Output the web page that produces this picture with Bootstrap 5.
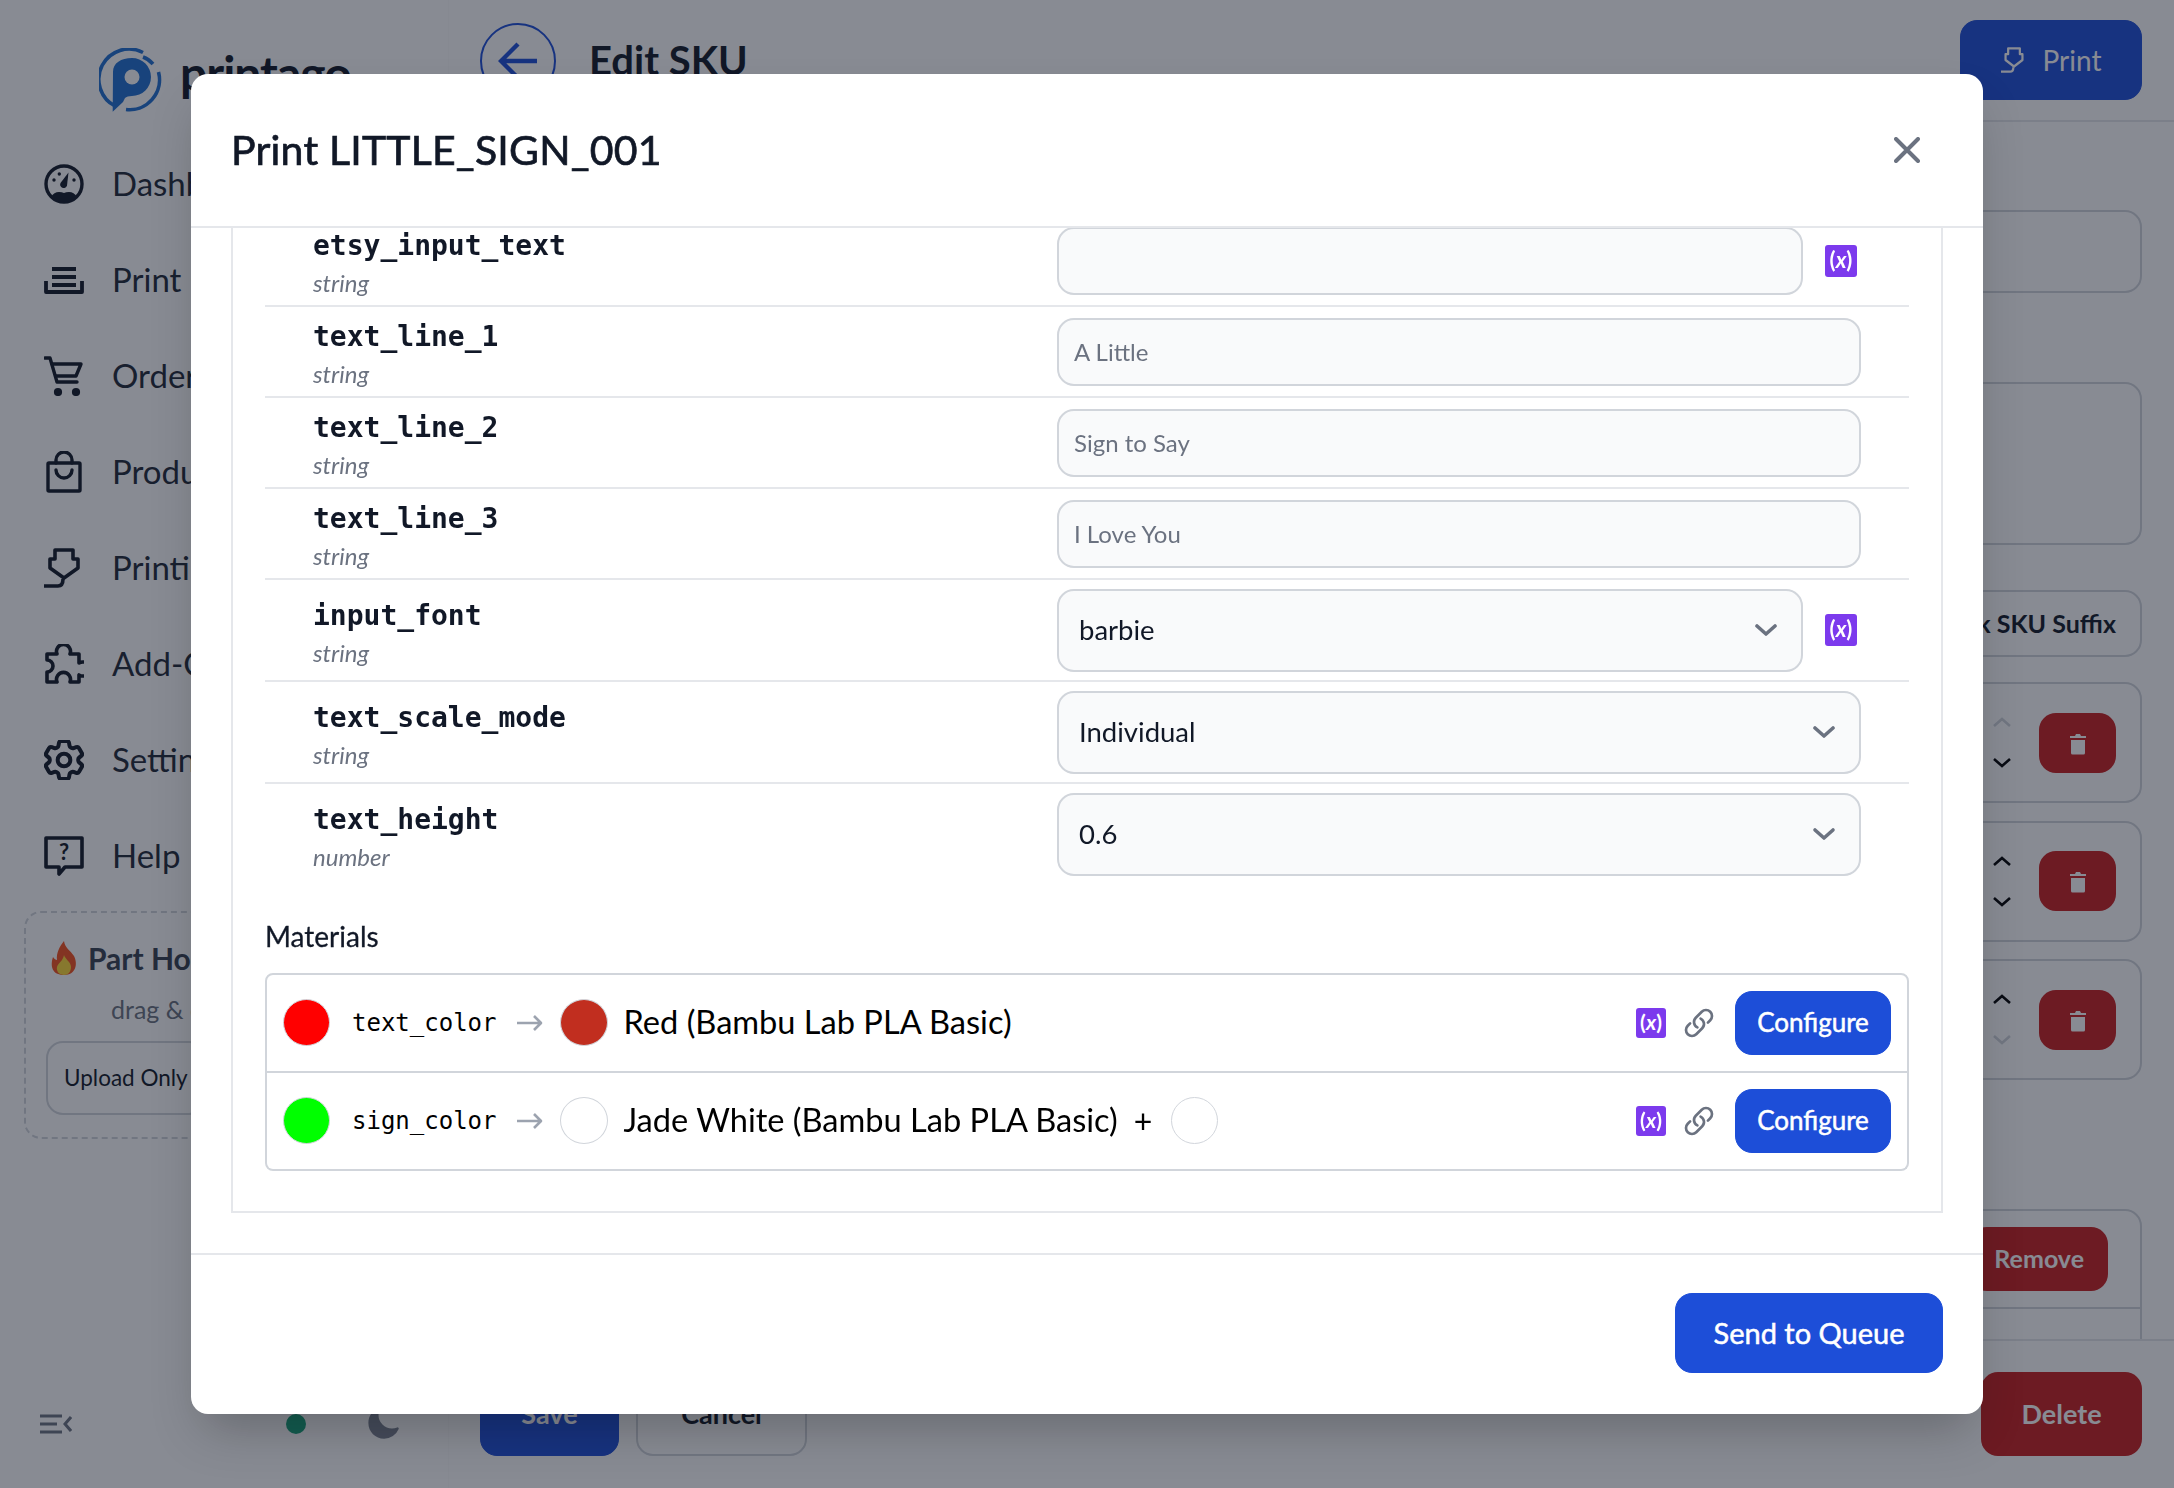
<!DOCTYPE html>
<html lang="en">
<head>
<meta charset="UTF-8">
<title>Printago - Edit SKU</title>
<link href="https://cdn.jsdelivr.net/npm/bootstrap@5.3.3/dist/css/bootstrap.min.css" rel="stylesheet">
<style>
  html, body { height: 100%; }
  body { font-family: "Lato", "Liberation Sans", sans-serif; color: #111827; background: #fff; overflow: hidden; }
  .app-shell { height: 1488px; }

  .side-bar { width: 449px; flex: none; height: 1488px; border-right: 1px solid #fafafa; }
  .logo-row { height: 136px; padding: 48px 0 0 99px; gap: 18px; }
  .logo-word { font-size: 48px; font-weight: 700; line-height: 50px; letter-spacing: -1px; color: #111827; }
  .nav-line { height: 96px; padding-left: 44px; font-size: 33px; color: #1f2937; white-space: nowrap; }
  .nav-glyph { width: 40px; flex: none; margin-right: 28px; text-align: center; }
  .nav-glyph svg { display: block; margin: 0 auto; }
  .hopper-box { margin: 7px 24px 0; height: 228px; border: 2px dashed #d1d5db; border-radius: 17px; padding: 27px 20px 0; }
  .hopper-title { font-size: 30px; font-weight: 700; color: #374151; line-height: 36px; gap: 10px; padding-left: 4px; }
  .hopper-hint { font-size: 25px; color: #6b7280; line-height: 32px; margin: 17px 0 0 65px; white-space: nowrap; }
  .hopper-btn { font-size: 22.5px; height: 74px; border: 2px solid #d1d5db; border-radius: 17px; padding: 0 16px; color: #111827; background: #fff; margin-top: 16px; white-space: nowrap; }
  .side-foot { margin-top: auto; height: 128px; padding: 0 0 0 40px; }

  .main-pane { min-width: 0; height: 1488px; }
  .top-head { height: 122px; border-bottom: 2px solid #e5e7eb; padding: 20px 32px 20px 31px; flex: none; }
  .back-round { width: 76px; height: 76px; border: 2px solid #1d4ed8; border-radius: 50%; margin-right: 33px; margin-top: 2px; }
  .head-title { font-size: 40px; font-weight: 700; margin: 0; }
  .btn-blue { background: #1d4ed8; border-color: #1d4ed8; color: #fff; }
  .print-top { width: 182px; height: 80px; border-radius: 17px; font-size: 28px; gap: 16px; }
  .main-scroll { padding: 88px 32px 0 31px; overflow: hidden; min-height: 0; }
  .ghost-field { height: 83px; border: 2px solid #d1d5db; border-radius: 17px; margin-bottom: 89px; }
  .ghost-area { height: 163px; border: 2px solid #d1d5db; border-radius: 17px; margin-bottom: 45px; }
  .suffix-btn { font-size: 25px; height: 67px; border: 2px solid #d1d5db; border-radius: 17px; padding: 0 24px; margin-bottom: 25px; background: #fff; color: #111827; font-weight: 700; }
  .step-card { height: 121px; border: 2px solid #d1d5db; border-radius: 17px; margin-bottom: 17.5px; padding: 0 24px 0 0; gap: 28px; }
  .step-arrows { gap: 31px; }
  .btn-red { background: #c81e1e; border: 0; color: #fff; }
  .trash-btn { width: 77px; height: 60px; border-radius: 17px; padding: 0; }
  .remove-card { margin-top: 129px; height: 200px; border: 2px solid #d1d5db; border-radius: 17px; padding: 16px 32px 0; }
  .remove-btn { height: 64px; border-radius: 17px; font-size: 25px; font-weight: 700; padding: 0 24px; }
  .remove-rule { border-top: 2px solid #d1d5db; margin: 16px -32px 0; }
  .bottom-bar { flex: none; height: 149px; border-top: 2px solid #e5e7eb; padding: 31px 32px 0 31px; gap: 17px; }
  .bar-btn { height: 84px; border-radius: 17px; font-size: 27px; font-weight: 700; }
  .save-btn { width: 139px; }
  .cancel-btn { width: 171px; border: 2px solid #d1d5db; background: #fff; color: #111827; }
  .delete-btn { width: 161px; margin-left: auto; }

  .modal-backdrop { --bs-backdrop-bg: #111827; --bs-backdrop-opacity: .5; }
  .print-dialog { max-width: none; width: 1792px; margin: 74px auto 0; }
  .print-content { border: 0; border-radius: 17px; overflow: hidden; box-shadow: 0 25px 50px -12px rgba(0,0,0,.25); }
  .print-header { height: 154px; padding: 0 40px 0 40px; border-bottom: 2px solid #e5e7eb; }
  .print-title { font-size: 41px; font-weight: 400; -webkit-text-stroke: .7px #111827; letter-spacing: .2px; line-height: 48px; color: #111827; }
  .close-x { margin: 0 23px 0 0; }
  .print-body { padding: 0 40px 40px; overflow: hidden; }
  .param-box { margin-top: -46px; border: 2px solid #e5e7eb; padding: 32px 32px 40px; }
  .param-line { padding: 0 48px; border-bottom: 2px solid #e5e7eb; }
  .param-line.last-line { border-bottom: 0; }
  .param-key { width: 744px; flex: none; padding-top: 8px; }
  .key-name { font-family: "DejaVu Sans Mono", monospace; font-size: 28px; font-weight: 700; line-height: 37px; color: #111827; }
  .key-type { font-size: 24px; font-style: italic; line-height: 38px; color: #6b7280; }
  .param-value { padding: 10.5px 0; gap: 22px; }
  .param-value.select-cell { padding: 8.5px 0; }
  .param-input { height: 68px; border: 2px solid #d1d5db; border-radius: 17px; background: #f9fafb; font-size: 24px; padding: 0 15px; }
  .param-input::placeholder { color: #6b7280; opacity: 1; }
  .param-select { height: 83px; border: 2px solid #d1d5db; border-radius: 17px; background-color: #f9fafb; font-size: 27.5px; color: #111827; padding: 0 60px 0 20px;
    background-image: url("data:image/svg+xml,%3csvg xmlns='http://www.w3.org/2000/svg' viewBox='0 0 24 24' fill='none' stroke='%236b7280' stroke-width='3.6' stroke-linecap='round' stroke-linejoin='round'%3e%3cpath d='M3 8l9 8 9-8'/%3e%3c/svg%3e");
    background-position: right 23px center; background-size: 24px 24px; }
  .var-chip { width: 32px; height: 32px; flex: none; border-radius: 3px; background: #7c3aed; color: #fff; font-size: 22px; font-weight: 700; line-height: 29px; text-align: center; margin-right: 4px; white-space: nowrap; }
  .var-chip.chip-small { width: 30px; height: 30px; font-size: 21px; line-height: 27px; margin-right: 0; }
  .mat-head { font-size: 28px; -webkit-text-stroke: .3px #111827; line-height: 40px; margin: 31.5px 0 17px; color: #111827; }
  .mat-list { --bs-list-group-border-color: #d1d5db; --bs-list-group-border-width: 2px; --bs-list-group-border-radius: 8px; }
  .mat-row { padding: 16px; }
  .swatch-dot { width: 47px; height: 47px; flex: none; border-radius: 50%; border: 1px solid #d1d5db; }
  .swatch-after { margin-left: 17px; width: 48px; }
  .mat-key { font-family: "DejaVu Sans Mono", monospace; font-size: 24px; color: #000; margin: 0 20px 0 22px; }
  .mat-name { font-size: 32.6px; color: #000; margin-left: 16px; white-space: nowrap; }
  .mat-plus { font-size: 32px; color: #000; margin: 0 19px 0 16px; }
  .cfg-btn { width: 156px; height: 64px; border-radius: 17px; font-size: 26px; -webkit-text-stroke: .5px #fff; padding: 0; margin-left: 20px; }
  .link-glyph { margin-left: 17px; }
  .print-footer { height: 161px; padding: 0 40px 3px; border-top: 2px solid #e5e7eb; }
  .queue-btn { width: 268px; height: 80px; border-radius: 17px; font-size: 29px; -webkit-text-stroke: .5px #fff; padding: 0; margin: 0; }
</style>
</head>
<body>

<div class="app-shell d-flex">
  <aside class="side-bar d-flex flex-column">
    <div class="logo-row d-flex align-items-start">
      <svg width="63" height="64" viewBox="0 0 63 64" fill="none">
        <path d="M44 4.5A30 30 0 0 0 16 58" stroke="#1f6fd0" stroke-width="3.6"/>
        <path d="M59.5 24A30 30 0 0 1 27 61.5" stroke="#1f6fd0" stroke-width="3.6"/>
        <path d="M44 9a24 24 0 0 1 10 7" stroke="#1f6fd0" stroke-width="3.6"/>
        <path d="M14 24C14 15 22 10 33 10a19 19 0 0 1 0 38q-5 0-7 2l-2 4-10.300 9.700z" fill="#1f6fd0"/>
        <circle cx="33" cy="29" r="7.500" fill="#fff"/>
      </svg>
      <div class="logo-word">printago</div>
    </div>

    <div class="nav-line d-flex align-items-center">
      <span class="nav-glyph"><svg width="40" height="40" viewBox="0 0 40 40" fill="none" stroke="#111827" stroke-width="3.4"><circle cx="20" cy="20" r="18"/><path d="M7 33q3-5 8-5 3 0 5 1 2-1 5-1 5 0 8 5-5 5-13 5T7 33z" fill="#111827" stroke="none"/><path d="M16.500 19l8-10.500-1.500 13a3.500 3.500 0 1 1-6.500-2.500z" fill="#111827" stroke="none"/><circle cx="10" cy="16" r="1.700" fill="#111827" stroke="none"/><circle cx="15.300" cy="10" r="1.700" fill="#111827" stroke="none"/><circle cx="30" cy="16" r="1.700" fill="#111827" stroke="none"/></svg></span>
      Dashboard
    </div>
    <div class="nav-line d-flex align-items-center">
      <span class="nav-glyph"><svg width="40" height="28" viewBox="0 0 40 28" fill="none" stroke="#111827" stroke-width="3.8" stroke-linejoin="round"><path d="M8 3h24M8 11h24M8 19h24M2 15v11h36V15"/></svg></span>
      Print Queue
    </div>
    <div class="nav-line d-flex align-items-center">
      <span class="nav-glyph"><svg width="40" height="40" viewBox="0 0 40 40" fill="none" stroke="#111827" stroke-width="3.4" stroke-linecap="round" stroke-linejoin="round"><path d="M1 2h5l7 24h20"/><path d="M8 8h29l-5 12H12"/><circle cx="14" cy="36" r="2.400" fill="#111827"/><circle cx="32" cy="36" r="2.400" fill="#111827"/></svg></span>
      Orders
    </div>
    <div class="nav-line d-flex align-items-center">
      <span class="nav-glyph"><svg width="36" height="42" viewBox="0 0 36 42" fill="none" stroke="#111827" stroke-width="3.4" stroke-linecap="round" stroke-linejoin="round"><rect x="2" y="12" width="32" height="28" rx="1"/><path d="M10 12V9a8 8 0 0 1 16 0v3M10 19a8 8 0 0 0 16 0"/></svg></span>
      Products
    </div>
    <div class="nav-line d-flex align-items-center">
      <span class="nav-glyph"><svg width="40" height="40" viewBox="0 0 40 40" fill="none" stroke="#111827" stroke-width="3.6" stroke-linejoin="round"><path d="M11 2h18v9h5v9L20 30 6 20v-9h5z"/><path d="M0 38h14q5 0 5-7"/></svg></span>
      Printing
    </div>
    <div class="nav-line d-flex align-items-center">
      <span class="nav-glyph"><svg width="40" height="40" viewBox="0 0 40 40" fill="none" stroke="#111827" stroke-width="3.6" stroke-linejoin="round"><path d="M3 10h10a7 7 0 1 1 13 0h9v9a7 7 0 1 1 0 12v7H26a7 7 0 1 0-13 0H3V28a6 6 0 1 0 0-12z"/></svg></span>
      Add-Ons
    </div>
    <div class="nav-line d-flex align-items-center">
      <span class="nav-glyph"><svg width="40" height="40" viewBox="2.500 2.500 19 19" fill="none" stroke="#111827" stroke-width="1.900" stroke-linejoin="round"><path d="M9.594 3.940c.09-.542.56-.94 1.110-.94h2.593c.55 0 1.020.398 1.110.94l.213 1.281c.063.374.313.686.645.87.074.04.147.083.22.127.325.196.72.257 1.075.124l1.217-.456a1.125 1.125 0 0 1 1.370.49l1.296 2.247a1.125 1.125 0 0 1-.26 1.431l-1.003.827c-.293.241-.438.613-.43.992a7.723 7.723 0 0 1 0 .255c-.008.378.137.75.43.991l1.004.827c.424.35.534.955.26 1.430l-1.298 2.247a1.125 1.125 0 0 1-1.369.491l-1.217-.456c-.355-.133-.75-.072-1.076.124a6.470 6.470 0 0 1-.22.128c-.331.183-.581.495-.644.869l-.213 1.281c-.09.543-.56.94-1.110.94h-2.594c-.55 0-1.019-.398-1.110-.94l-.213-1.281c-.062-.374-.312-.686-.644-.87a6.520 6.520 0 0 1-.22-.127c-.325-.196-.72-.257-1.076-.124l-1.217.456a1.125 1.125 0 0 1-1.369-.49l-1.297-2.247a1.125 1.125 0 0 1 .26-1.431l1.004-.827c.292-.24.437-.613.43-.991a6.932 6.932 0 0 1 0-.255c.007-.38-.138-.751-.43-.992l-1.004-.827a1.125 1.125 0 0 1-.26-1.430l1.297-2.247a1.125 1.125 0 0 1 1.370-.491l1.216.456c.356.133.751.072 1.076-.124.072-.044.146-.086.22-.128.332-.183.582-.495.644-.869l.214-1.280Z"/><circle cx="12" cy="12" r="3"/></svg></span>
      Settings
    </div>
    <div class="nav-line d-flex align-items-center">
      <span class="nav-glyph"><svg width="40" height="40" viewBox="0 0 40 40" fill="none" stroke="#111827" stroke-width="3.6" stroke-linejoin="round"><path d="M2 2h36v29H21l-6 7v-7H2z"/><text x="20" y="24" text-anchor="middle" font-family="Lato, sans-serif" font-size="22" font-weight="700" fill="#111827" stroke="none">?</text></svg></span>
      Help
    </div>

    <div class="hopper-box">
      <div class="hopper-title d-flex align-items-center">
        <svg width="28" height="34" viewBox="0 0 28 34"><path d="M14 0c1 7 6 9 10 15 4 8 2 19-10 19S0 25 3 16c1 2 3 3 4 3C6 12 10 5 14 0z" fill="#f4511e"/><path d="M14 14c1 4 7 7 7 12 0 5-3 8-7 8s-8-3-7-8c1-4 6-6 7-12z" fill="#fdd835"/></svg>
        Part Hopper
      </div>
      <div class="hopper-hint">drag &amp; drop files</div>
      <div class="d-flex gap-2"><button type="button" class="hopper-btn">Upload Only</button></div>
    </div>

    <div class="side-foot d-flex align-items-center">
      <svg width="32" height="20" viewBox="0 0 32 20" fill="none" stroke="#6b7280" stroke-width="3"><path d="M0 2h22M0 10h17M0 18h22M31 3l-6 7 6 7"/></svg>
      <span class="rounded-circle" style="width:20px;height:20px;background:#16a37a;margin-left:214px"></span>
      <svg style="margin-left:59px" width="36" height="36" viewBox="0 0 24 24" fill="#7b8290"><path d="M9.528 1.718a.75.75 0 0 1 .162.819A8.970 8.970 0 0 0 9 6a9 9 0 0 0 9 9 8.970 8.970 0 0 0 3.463-.69.75.75 0 0 1 .981.98 10.503 10.503 0 0 1-9.694 6.460c-5.799 0-10.500-4.700-10.500-10.500 0-4.368 2.667-8.112 6.460-9.694a.75.75 0 0 1 .818.162Z"/></svg>
    </div>
  </aside>

  <main class="main-pane flex-grow-1 d-flex flex-column">
    <header class="top-head d-flex align-items-center">
      <div class="back-round d-flex align-items-center justify-content-center">
        <svg width="40" height="38" viewBox="0 0 40 38" fill="none" stroke="#1d4ed8" stroke-width="4.400"><path d="M39 19H4M20 2L3 19l17 17"/></svg>
      </div>
      <h1 class="head-title">Edit SKU</h1>
      <button type="button" class="btn btn-blue print-top ms-auto d-flex align-items-center justify-content-center">
        <svg width="26" height="30" viewBox="0 0 40 40" fill="none" stroke="#fff" stroke-width="3.400" stroke-linejoin="round"><path d="M11 2h18v9h4v9L20 30 7 20v-9h4z"/><path d="M0 38h14q5 0 5-7"/></svg>
        Print
      </button>
    </header>

    <div class="main-scroll flex-grow-1">
      <div class="ghost-field"></div>
      <div class="ghost-area"></div>
      <div class="d-flex justify-content-end"><button type="button" class="suffix-btn">Check SKU Suffix</button></div>

      <div class="step-card d-flex align-items-center justify-content-end">
        <div class="step-arrows d-flex flex-column">
          <svg width="18" height="10" viewBox="0 0 18 10" fill="none" stroke="#d1d5db" stroke-width="2.600"><path d="M1 9l8-7 8 7"/></svg>
          <svg width="18" height="10" viewBox="0 0 18 10" fill="none" stroke="#000" stroke-width="2.600"><path d="M1 1l8 7 8-7"/></svg>
        </div>
        <button type="button" class="btn btn-red trash-btn"><svg width="18" height="22" viewBox="0 0 18 22" fill="#fff"><path d="M1 5h16v-2H12l-1-2H7L6 3H1zM2 7h14v13a1.500 1.500 0 0 1-1.500 1.500h-11A1.500 1.500 0 0 1 2 20z"/></svg></button>
      </div>
      <div class="step-card d-flex align-items-center justify-content-end">
        <div class="step-arrows d-flex flex-column">
          <svg width="18" height="10" viewBox="0 0 18 10" fill="none" stroke="#000" stroke-width="2.600"><path d="M1 9l8-7 8 7"/></svg>
          <svg width="18" height="10" viewBox="0 0 18 10" fill="none" stroke="#000" stroke-width="2.600"><path d="M1 1l8 7 8-7"/></svg>
        </div>
        <button type="button" class="btn btn-red trash-btn"><svg width="18" height="22" viewBox="0 0 18 22" fill="#fff"><path d="M1 5h16v-2H12l-1-2H7L6 3H1zM2 7h14v13a1.500 1.500 0 0 1-1.500 1.500h-11A1.500 1.500 0 0 1 2 20z"/></svg></button>
      </div>
      <div class="step-card d-flex align-items-center justify-content-end">
        <div class="step-arrows d-flex flex-column">
          <svg width="18" height="10" viewBox="0 0 18 10" fill="none" stroke="#000" stroke-width="2.600"><path d="M1 9l8-7 8 7"/></svg>
          <svg width="18" height="10" viewBox="0 0 18 10" fill="none" stroke="#d1d5db" stroke-width="2.600"><path d="M1 1l8 7 8-7"/></svg>
        </div>
        <button type="button" class="btn btn-red trash-btn"><svg width="18" height="22" viewBox="0 0 18 22" fill="#fff"><path d="M1 5h16v-2H12l-1-2H7L6 3H1zM2 7h14v13a1.500 1.500 0 0 1-1.500 1.500h-11A1.500 1.500 0 0 1 2 20z"/></svg></button>
      </div>

      <div class="remove-card">
        <div class="d-flex justify-content-end"><button type="button" class="btn btn-red remove-btn">Remove</button></div>
        <div class="remove-rule"></div>
      </div>
    </div>

    <footer class="bottom-bar d-flex">
      <button type="button" class="btn btn-blue bar-btn save-btn">Save</button>
      <button type="button" class="btn bar-btn cancel-btn">Cancel</button>
      <button type="button" class="btn btn-red bar-btn delete-btn">Delete</button>
    </footer>
  </main>
</div>

<div class="modal-backdrop show"></div>

<div class="modal d-block" tabindex="-1">
  <div class="modal-dialog print-dialog">
    <div class="modal-content print-content">
      <div class="modal-header print-header">
        <h5 class="modal-title print-title">Print LITTLE_SIGN_001</h5>
        <button type="button" class="btn p-0 border-0 ms-auto close-x" aria-label="Close">
          <svg class="d-block" width="26" height="26" viewBox="0 0 26 26" fill="none" stroke="#6b7280" stroke-width="4" stroke-linecap="round"><path d="M2 2l22 22M24 2L2 24"/></svg>
        </button>
      </div>

      <div class="modal-body print-body">
        <div class="param-box">
          <div class="param-line d-flex align-items-center">
            <div class="param-key"><div class="key-name">etsy_input_text</div><div class="key-type">string</div></div>
            <div class="param-value flex-grow-1 d-flex align-items-center">
              <input type="text" class="form-control param-input">
              <span class="var-chip">(<i>x</i>)</span>
            </div>
          </div>
          <div class="param-line d-flex align-items-center">
            <div class="param-key"><div class="key-name">text_line_1</div><div class="key-type">string</div></div>
            <div class="param-value flex-grow-1"><input type="text" class="form-control param-input" placeholder="A Little"></div>
          </div>
          <div class="param-line d-flex align-items-center">
            <div class="param-key"><div class="key-name">text_line_2</div><div class="key-type">string</div></div>
            <div class="param-value flex-grow-1"><input type="text" class="form-control param-input" placeholder="Sign to Say"></div>
          </div>
          <div class="param-line d-flex align-items-center">
            <div class="param-key"><div class="key-name">text_line_3</div><div class="key-type">string</div></div>
            <div class="param-value flex-grow-1"><input type="text" class="form-control param-input" placeholder="I Love You"></div>
          </div>
          <div class="param-line d-flex align-items-center">
            <div class="param-key"><div class="key-name">input_font</div><div class="key-type">string</div></div>
            <div class="param-value select-cell flex-grow-1 d-flex align-items-center">
              <select class="form-select param-select"><option>barbie</option></select>
              <span class="var-chip">(<i>x</i>)</span>
            </div>
          </div>
          <div class="param-line d-flex align-items-center">
            <div class="param-key"><div class="key-name">text_scale_mode</div><div class="key-type">string</div></div>
            <div class="param-value select-cell flex-grow-1"><select class="form-select param-select"><option>Individual</option></select></div>
          </div>
          <div class="param-line last-line d-flex align-items-center">
            <div class="param-key"><div class="key-name">text_height</div><div class="key-type">number</div></div>
            <div class="param-value select-cell flex-grow-1"><select class="form-select param-select"><option>0.6</option></select></div>
          </div>

          <div class="mat-head">Materials</div>
          <ul class="list-group mat-list">
            <li class="list-group-item mat-row d-flex align-items-center">
              <span class="swatch-dot" style="background:#ff0000"></span>
              <span class="mat-key">text_color</span>
              <svg width="26" height="16" viewBox="0 0 26 16" fill="none" stroke="#9ca3af" stroke-width="2.600" stroke-linejoin="round"><path d="M0 8h24M17 1l7 7-7 7"/></svg>
              <span class="swatch-dot swatch-after" style="background:#c12e1f"></span>
              <span class="mat-name">Red (Bambu Lab PLA Basic)</span>
              <span class="var-chip chip-small ms-auto">(<i>x</i>)</span>
              <svg class="link-glyph" width="32" height="32" viewBox="0 0 24 24" fill="none" stroke="#6b7280" stroke-width="2" stroke-linecap="round" stroke-linejoin="round"><path d="M13.190 8.688a4.500 4.500 0 0 1 1.242 7.244l-4.500 4.500a4.500 4.500 0 0 1-6.364-6.364l1.757-1.757m13.350-.622 1.757-1.757a4.500 4.500 0 0 0-6.364-6.364l-4.500 4.500a4.500 4.500 0 0 0 1.242 7.244"/></svg>
              <button type="button" class="btn btn-blue cfg-btn">Configure</button>
            </li>
            <li class="list-group-item mat-row d-flex align-items-center">
              <span class="swatch-dot" style="background:#00ff00"></span>
              <span class="mat-key">sign_color</span>
              <svg width="26" height="16" viewBox="0 0 26 16" fill="none" stroke="#9ca3af" stroke-width="2.600" stroke-linejoin="round"><path d="M0 8h24M17 1l7 7-7 7"/></svg>
              <span class="swatch-dot swatch-after" style="background:#fff"></span>
              <span class="mat-name">Jade White (Bambu Lab PLA Basic)</span>
              <span class="mat-plus">+</span>
              <span class="swatch-dot" style="background:#fff"></span>
              <span class="var-chip chip-small ms-auto">(<i>x</i>)</span>
              <svg class="link-glyph" width="32" height="32" viewBox="0 0 24 24" fill="none" stroke="#6b7280" stroke-width="2" stroke-linecap="round" stroke-linejoin="round"><path d="M13.190 8.688a4.500 4.500 0 0 1 1.242 7.244l-4.500 4.500a4.500 4.500 0 0 1-6.364-6.364l1.757-1.757m13.350-.622 1.757-1.757a4.500 4.500 0 0 0-6.364-6.364l-4.500 4.500a4.500 4.500 0 0 0 1.242 7.244"/></svg>
              <button type="button" class="btn btn-blue cfg-btn">Configure</button>
            </li>
          </ul>
        </div>
      </div>

      <div class="modal-footer print-footer">
        <button type="button" class="btn btn-blue queue-btn">Send to Queue</button>
      </div>
    </div>
  </div>
</div>

<script src="https://cdn.jsdelivr.net/npm/bootstrap@5.3.3/dist/js/bootstrap.bundle.min.js"></script>
</body>
</html>
